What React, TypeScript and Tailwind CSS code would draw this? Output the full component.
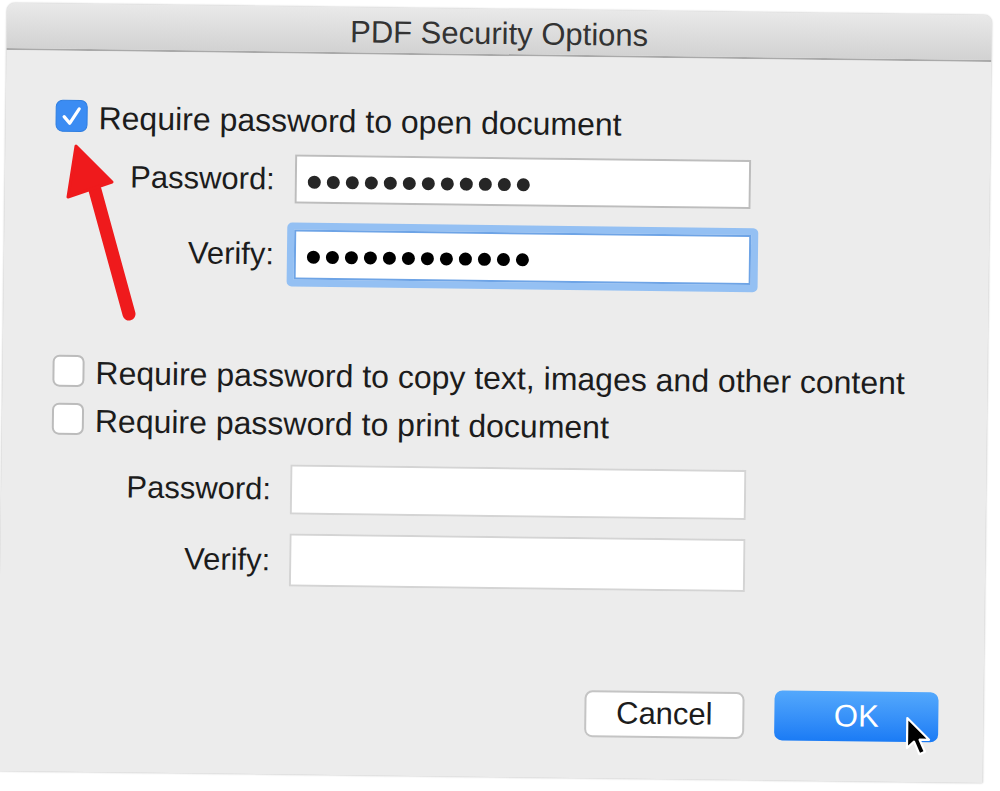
import React from "react";

const font = { fontFamily: '"Liberation Sans", Arial, sans-serif' };

function Dots({ color }: { color: string }) {
  return (
    <div className="flex items-center gap-[6px] pl-[11px] pt-[5px]">
      {Array.from({ length: 12 }).map((_, i) => (
        <span key={i} className={`block w-[13px] h-[13px] rounded-full ${color}`} />
      ))}
    </div>
  );
}

function Check({ checked }: { checked?: boolean }) {
  if (checked) {
    return (
      <span className="flex w-[32px] h-[32px] rounded-[7px] bg-[#3b8cf3] border border-[#2f7ee0] items-center justify-center shrink-0">
        <svg width="32" height="32" viewBox="0 0 32 32">
          <path d="M8 17 L14 24 L24 8.5" stroke="white" strokeWidth="3.4" fill="none" strokeLinecap="round" strokeLinejoin="round" />
        </svg>
      </span>
    );
  }
  return (
    <span className="block w-[32px] h-[32px] rounded-[7px] bg-white border-2 border-[#bcbcbc] shrink-0" />
  );
}

function Label({ children }: { children: React.ReactNode }) {
  return (
    <span className="w-[220px] text-right text-[31px] leading-[36px] text-[#1c1c1c] shrink-0">{children}</span>
  );
}

export default function App() {
  return (
    <div className="w-[1000px] h-[791px] bg-white relative overflow-hidden pl-[7px] pt-[3px]" style={font}>
      <div className="w-[985px] h-[768px] bg-[#ececec] rotate-[0.7deg] origin-top-left shadow-[0_0_2px_rgba(0,0,0,0.3)] rounded-t-[8px] flex flex-col">
        <div className="h-[47px] shrink-0 bg-gradient-to-b from-[#e9e9e9] to-[#d2d2d2] border-b-2 border-[#a9a9a9] rounded-t-[8px] flex items-center justify-center pt-[5px]">
          <span className="text-[31px] leading-[36px] text-[#333333]">PDF Security Options</span>
        </div>
        <div className="flex flex-col pl-[50px]">
          <div className="flex items-center gap-[11px] h-[32px] mt-[49px]">
            <Check checked />
            <span className="text-[32px] leading-[36px] text-[#1c1c1c] pt-[4px]">Require password to open document</span>
          </div>
          <div className="flex items-center h-[49px] mt-[20px]">
            <Label>Password:</Label>
            <div className="ml-[20px] w-[456px] h-[49px] bg-white border-2 border-[#bdbdbd] flex items-center">
              <Dots color="bg-[#262626]" />
            </div>
          </div>
          <div className="flex items-center h-[64px] mt-[19px]">
            <Label>Verify:</Label>
            <div className="ml-[13px] w-[471px] h-[64px] bg-[#94c0f3] rounded-[5px] p-[7px]">
              <div className="w-full h-full bg-white border-2 border-[#6ea4e6] flex items-center">
                <Dots color="bg-black" />
              </div>
            </div>
          </div>
          <div className="flex items-center gap-[11px] h-[32px] mt-[71px]">
            <Check />
            <span className="text-[32px] leading-[36px] text-[#1c1c1c] pt-[4px]">Require password to copy text, images and other content</span>
          </div>
          <div className="flex items-center gap-[11px] h-[32px] mt-[16px]">
            <Check />
            <span className="text-[32px] leading-[36px] text-[#1c1c1c] pt-[4px]">Require password to print document</span>
          </div>
          <div className="flex items-center h-[50px] mt-[27px]">
            <Label>Password:</Label>
            <div className="ml-[19px] w-[456px] h-[50px] bg-white border-2 border-[#d4d4d4]" />
          </div>
          <div className="flex items-center h-[53px] mt-[19px]">
            <Label>Verify:</Label>
            <div className="ml-[19px] w-[456px] h-[53px] bg-white border-2 border-[#d4d4d4]" />
          </div>
          <div className="flex justify-end items-center gap-[30px] pr-[45px] mt-[98px]">
            <button className="w-[160px] h-[47px] bg-white border-2 border-[#c4c4c4] rounded-[8px] text-[31px] leading-[36px] text-[#1c1c1c]" style={font}>Cancel</button>
            <button className="relative w-[164px] h-[50px] bg-gradient-to-b from-[#53a8fc] to-[#1a7bf5] rounded-[8px] text-[31px] leading-[36px] text-white" style={font}>
              OK
              <svg className="absolute left-[131px] top-[24px]" width="28" height="42" viewBox="0 0 28 42">
                <path d="M2 2 L2 32 L9 25.5 L14.5 38 L20 35.5 L14.5 23.5 L24 23.5 Z" fill="black" stroke="white" strokeWidth="2.2" strokeLinejoin="round" />
              </svg>
            </button>
          </div>
        </div>
      </div>
      <svg className="absolute left-0 top-0" width="1000" height="791" viewBox="0 0 1000 791">
        <path d="M129 314 L95 190" stroke="#ef1a1c" strokeWidth="13" strokeLinecap="round" fill="none" />
        <path d="M76 146 L68 197 L112 182 Z" fill="#ef1a1c" stroke="#ef1a1c" strokeWidth="3" strokeLinejoin="round" />
      </svg>
    </div>
  );
}
